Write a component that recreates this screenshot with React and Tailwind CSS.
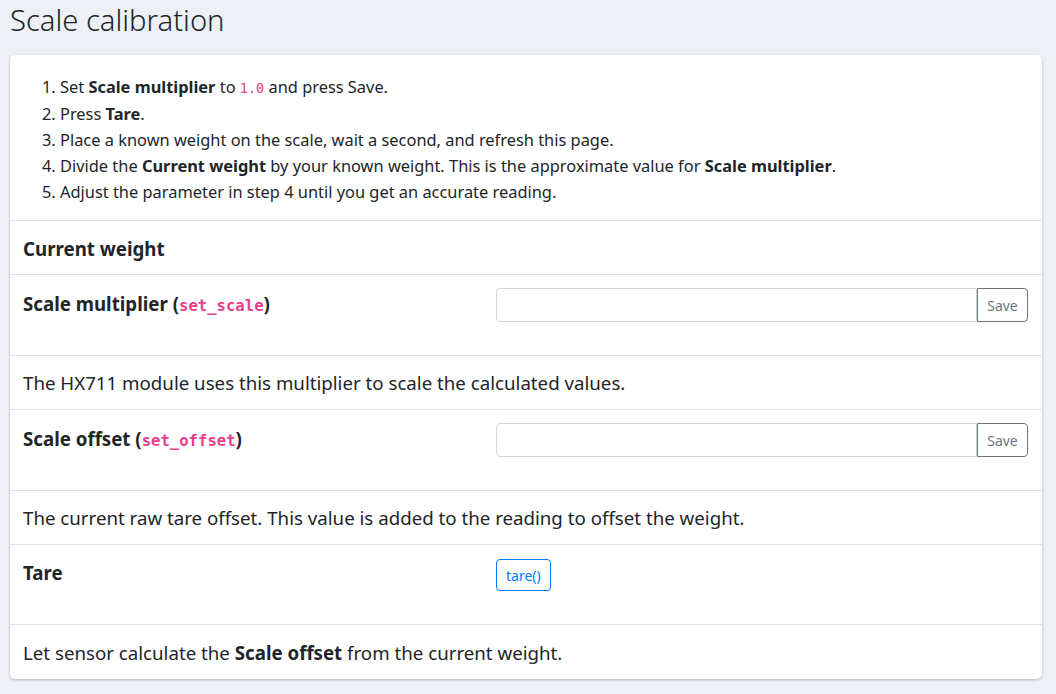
export default function App() {
  const font = { fontFamily: '"Noto Sans", "Open Sans", sans-serif' };
  const code = "font-['DejaVu_Sans_Mono',monospace] text-[#e83e8c]";
  return (
    <div className="min-h-[694px] bg-[#edf0f5] pl-[10px] pr-[14px] pt-[1px] pb-4 text-[#212529]" style={font}>
      <h1 className="text-[29.2px] font-light leading-[38px] mb-[16px]">Scale calibration</h1>
      <div className="bg-white rounded-[5px] shadow-[0_1px_3px_rgba(0,0,0,0.25)]">
        <div className="pt-[19px] pb-[15px] px-[13px] border-b border-[#dee2e6]">
          <ol className="list-decimal pl-[37px] text-[16.4px] leading-[26px]">
            <li>Set <b>Scale multiplier</b> to <code className={`${code} text-[13.5px]`}>1.0</code> and press Save.</li>
            <li>Press <b>Tare</b>.</li>
            <li>Place a known weight on the scale, wait a second, and refresh this page.</li>
            <li>Divide the <b>Current weight</b> by your known weight. This is the approximate value for <b>Scale multiplier</b>.</li>
            <li>Adjust the parameter in step 4 until you get an accurate reading.</li>
          </ol>
        </div>
        <div className="h-[54px] flex items-center pt-[3px] px-[13px] border-b border-[#dee2e6]">
          <span className="text-[18.7px] font-bold">Current weight</span>
        </div>
        <div className="h-[81px] flex px-[13px] pt-[13px] border-b border-[#dee2e6]">
          <div className="w-[473px] text-[18.7px] font-bold leading-[31px]">Scale multiplier (<code className={`${code} text-[15.6px] font-bold`}>set_scale</code>)</div>
          <div className="flex-1 flex h-[34px] pr-px">
            <input className="flex-1 border border-[#ced4da] rounded-l-[4px] outline-none" />
            <button className="w-[51px] border border-[#6c757d] rounded-r-[4px] text-[14px] text-[#6c757d]">Save</button>
          </div>
        </div>
        <div className="h-[54px] flex items-center pt-[2px] px-[13px] border-b border-[#dee2e6] text-[18.7px]">
          The HX711 module uses this multiplier to scale the calculated values.
        </div>
        <div className="h-[81px] flex px-[13px] pt-[13px] border-b border-[#dee2e6]">
          <div className="w-[473px] text-[18.7px] font-bold leading-[31px]">Scale offset (<code className={`${code} text-[15.6px] font-bold`}>set_offset</code>)</div>
          <div className="flex-1 flex h-[34px] pr-px">
            <input className="flex-1 border border-[#ced4da] rounded-l-[4px] outline-none" />
            <button className="w-[51px] border border-[#6c757d] rounded-r-[4px] text-[14px] text-[#6c757d]">Save</button>
          </div>
        </div>
        <div className="h-[54px] flex items-center pt-[2px] px-[13px] border-b border-[#dee2e6] text-[18.7px]">
          The current raw tare offset. This value is added to the reading to offset the weight.
        </div>
        <div className="h-[80px] flex px-[13px] pt-[14px] border-b border-[#dee2e6]">
          <div className="w-[473px] text-[18.7px] font-bold leading-[28px]">Tare</div>
          <div>
            <button className="h-[32px] px-[9px] border border-[#007bff] rounded-[4px] text-[14px] text-[#007bff]">tare()</button>
          </div>
        </div>
        <div className="h-[54px] flex items-center pt-[2px] px-[13px] text-[18.7px]">
          <span>Let sensor calculate the <b>Scale offset</b> from the current weight.</span>
        </div>
      </div>
    </div>
  );
}
